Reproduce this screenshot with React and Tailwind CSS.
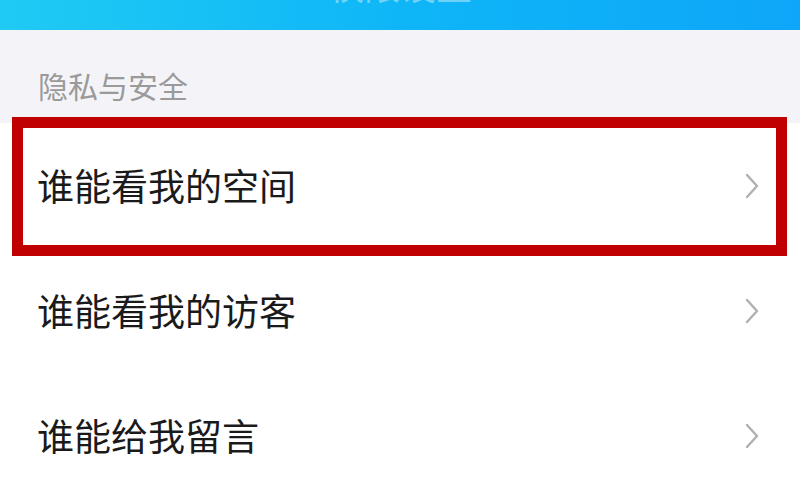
import React from "react";

const rows = [
  { id: 1, label: "谁能看我的空间", marked: true },
  { id: 2, label: "谁能看我的访客" },
  { id: 3, label: "谁能给我留言" },
];

function Chevron() {
  return (
    <svg width="16" height="26" viewBox="0 0 16 26" fill="none" className="shrink-0">
      <path d="M3 2 L13 13 L3 24" stroke="#b0b0b0" strokeWidth="2.4" strokeLinecap="round" strokeLinejoin="round" />
    </svg>
  );
}

export default function App() {
  return (
    <div
      className="w-[800px] h-[500px] overflow-hidden bg-white"
      style={{ fontFamily: '"Noto Sans CJK SC", "Noto Sans", sans-serif' }}
    >
      {/* Title bar, mostly scrolled off */}
      <div className="h-[30px] overflow-hidden bg-gradient-to-r from-[#1fcbf3] via-[#0fb6f7] to-[#0ea6f9] flex justify-center">
        <span className="text-white text-[36px] leading-none mt-[-34px] opacity-40">权限设置</span>
      </div>

      {/* Section header */}
      <div className="bg-[#f4f4f8] h-[93px] px-[38px] pt-[40px]">
        <p className="text-[30px] leading-none text-[#9a9a9a]">隐私与安全</p>
      </div>

      {/* Rows */}
      <div className="bg-white">
        {rows.map((row) => (
          <div key={row.id} className="relative h-[125px] flex items-center justify-between pl-[37px] pr-[40px]">
            <span className="text-[37px] leading-none text-[#1a1a1a]">{row.label}</span>
            <Chevron />
            {row.marked && (
              <div className="absolute left-[12px] right-[13px] top-[-6px] bottom-[-8px] border-[11px] border-[#c00000] pointer-events-none" />
            )}
          </div>
        ))}
      </div>
    </div>
  );
}
